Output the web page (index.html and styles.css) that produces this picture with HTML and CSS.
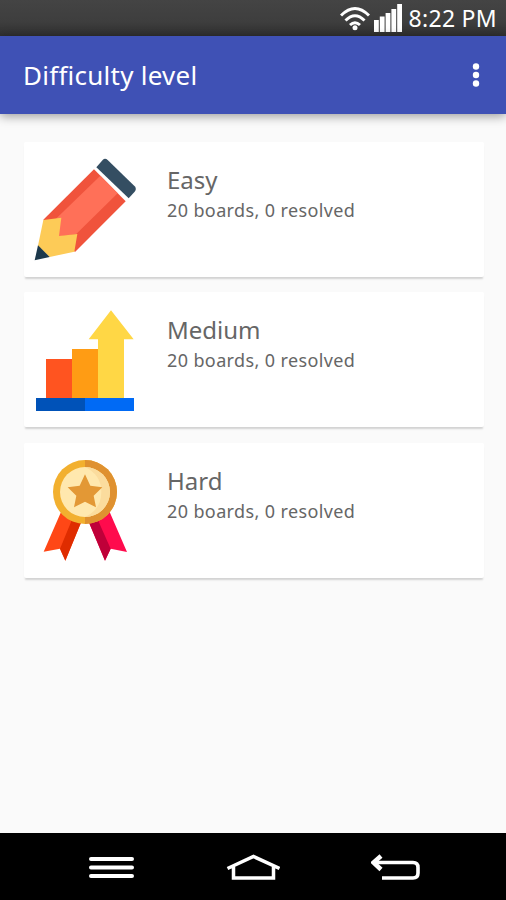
FILE: index.html
```
<!DOCTYPE html>
<html lang="en">
<head>
  <meta charset="UTF-8">
  <meta name="viewport" content="width=device-width, initial-scale=1.0">
  <title>Difficulty level</title>
  <link rel="stylesheet" href="styles.css">
</head>
<body>
  <div class="status-bar">
    <svg class="wifi" width="30" height="26" viewBox="0 0 30 26" fill="none" stroke="#fff" stroke-width="3">
      <path d="M1 10.500Q15-3.500 29 10.500M5.500 15.500Q15 6 24.500 15.500M10 20Q15 15.500 20 20"/>
      <circle cx="15" cy="22.800" r="2.500" fill="#fff" stroke="none"/>
    </svg>
    <svg class="signal" width="28" height="28" viewBox="0 0 28 28" fill="#fff">
      <path d="M0 16h4.800v12H0zM5.800 12.500h4.800V28H5.800zM11.600 9h4.800v19h-4.800zM17.400 5h4.800v23h-4.800zM23.200 0H28v28h-4.800z"/>
    </svg>
    <span class="clock">8:22 PM</span>
  </div>

  <header class="toolbar">
    <h1>Difficulty level</h1>
    <svg class="overflow" width="8" height="26" viewBox="0 0 8 26" fill="#fff">
      <circle cx="4" cy="4.500" r="3.200"/>
      <circle cx="4" cy="13" r="3.200"/>
      <circle cx="4" cy="21.500" r="3.200"/>
    </svg>
  </header>

  <main class="levels">
    <div class="card">
      <svg class="icon" viewBox="12 6 390 405">
        <path fill="#f0533c" d="M222 88L317 184L165 336L70 239z"/>
        <path fill="#ff7058" d="M241 107L293 160L168 283L118 289L98 267L94 250z"/>
        <path fill="#fdcb57" d="M70 240L124 233L117 288L172 282L163 335L89 351L54 317z"/>
        <path fill="#1c384b" d="M54 316L89 351L44 361z"/>
        <path fill="#344e62" d="M229 82L248 60Q255 53 263 60L344 139Q351 147 344 155L326 175z"/>
      </svg>
      <div class="info">
        <h2>Easy</h2>
        <p>20 boards, 0 resolved</p>
      </div>
    </div>

    <div class="card">
      <svg class="icon" viewBox="12 6 390 405">
        <path fill="#ff5420" d="M78 207h78v118H78z"/>
        <path fill="#ff9c14" d="M156 177h78v148h-78z"/>
        <path fill="#ffd745" d="M234 325V148h-28L273 61L341 148h-29v177z"/>
        <path fill="#0052b8" d="M48 324h147v39H48z"/>
        <path fill="#006af5" d="M195 324h147v39H195z"/>
      </svg>
      <div class="info">
        <h2>Medium</h2>
        <p>20 boards, 0 resolved</p>
      </div>
    </div>

    <div class="card">
      <svg class="icon" viewBox="12 9 390 405">
        <path fill="#ff4716" d="M124 214L184 245L136 362L120 326L71 335z"/>
        <path fill="#df2c00" d="M159 232L184 245L136 362L120 326z"/>
        <path fill="#ff0b4d" d="M206 245L268 214L321 336L272 326L255 362z"/>
        <path fill="#bf0039" d="M206 245L231 234L272 326L255 362z"/>
        <circle cx="195" cy="156" r="96" fill="#f2b02f"/>
        <path fill="#df9130" d="M195 60A96 96 0 0 1 195 252z"/>
        <circle cx="195" cy="156" r="75" fill="#ffe8ae"/>
        <path fill="#fbdc9d" d="M195 81A75 75 0 0 1 195 231Q244 208 244 156T195 81z"/>
        <path fill="#e39835" d="M195 103L211 137L247 142L221 167L228 202L195 185L162 202L169 167L143 142L179 137z"/>
      </svg>
      <div class="info">
        <h2>Hard</h2>
        <p>20 boards, 0 resolved</p>
      </div>
    </div>
  </main>

  <nav class="nav-bar">
    <svg width="46" height="26" viewBox="0 0 46 26" stroke="#fff" stroke-width="4" stroke-linecap="round">
      <path d="M3 5h41M3 13.500h41M3 22h41"/>
    </svg>
    <svg width="54" height="26" viewBox="0 0 54 26" fill="none" stroke="#fff" stroke-width="3.500">
      <path d="M1.500 14.500L27.500 2.500L53.500 14.500M7.500 12V24H47.500V12"/>
    </svg>
    <svg width="50" height="26" viewBox="0 0 50 26" fill="none" stroke="#fff" stroke-width="3.600">
      <path d="M3 8.500H42Q47 8.500 47 13.500V19Q47 24 42 24H11"/>
      <path d="M10 2L2.500 8.500L10 15.500" stroke-width="4.500"/>
    </svg>
  </nav>
</body>
</html>
```

FILE: styles.css
```
* {
  box-sizing: border-box;
}
body {
  margin: 0;
  height: 900px;
  display: flex;
  flex-direction: column;
  overflow: hidden;
  background-color: #fafafa;
  font-family: 'Noto Sans', 'Open Sans', sans-serif;
}
h1, h2, p {
  margin: 0;
  font-weight: normal;
  white-space: nowrap;
}
svg {
  display: block;
}
.status-bar {
  height: 36px;
  display: flex;
  align-items: center;
  justify-content: flex-end;
  padding-right: 9px;
  background: linear-gradient(#444, #3e3e3e 60%, #303030);
  color: #fff;
}
.wifi {
  margin-right: 4px;
}
.signal {
  margin-right: 7px;
}
.clock {
  font-size: 23px;
  line-height: 36px;
  letter-spacing: 0.3px;
}
.toolbar {
  height: 78px;
  display: flex;
  align-items: center;
  justify-content: space-between;
  padding: 0 26px 0 23px;
  background-color: #3f51b5;
  color: #fff;
  box-shadow: 0 2px 10px rgba(0, 0, 0, 0.4);
}
.toolbar h1 {
  font-size: 26px;
  letter-spacing: 0.25px;
}
.levels {
  flex: 1;
  display: flex;
  flex-direction: column;
  gap: 15.4px;
  padding: 28px 22px 0 24px;
}
.card {
  height: 135px;
  display: flex;
  background-color: #fff;
  border-radius: 2px;
  box-shadow: 0 3px 2px -1px rgba(0, 0, 0, 0.16);
}
.icon {
  width: 130px;
  height: 135px;
}
.info {
  padding: 21px 0 0 13px;
  color: #666;
}
.info h2 {
  font-size: 24px;
  line-height: 34px;
}
.info p {
  font-size: 18px;
  line-height: 26px;
  letter-spacing: 0.38px;
}
.nav-bar {
  height: 67px;
  display: flex;
  align-items: center;
  justify-content: space-between;
  padding: 1px 85px 0 88px;
  background-color: #000;
}
```
